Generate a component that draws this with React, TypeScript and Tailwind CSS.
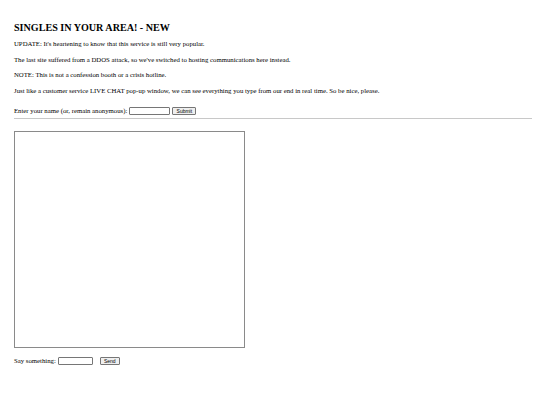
export default function App() {
  return (
    <div className="min-h-screen bg-white text-black font-['Liberation_Serif',serif]">
      <div className="px-[14px] pt-[22px]">
        <h2 className="text-[10.1px] leading-[11px] font-bold">SINGLES IN YOUR AREA! - NEW</h2>
        <div className="mt-[7px] flex flex-col gap-[7.6px] text-[6.75px] leading-[8px]">
          <p>UPDATE: It's heartening to know that this service is still very popular.</p>
          <p>The last site suffered from a DDOS attack, so we've switched to hosting communications here instead.</p>
          <p>NOTE: This is not a confession booth or a crisis hotline.</p>
          <p>Just like a customer service LIVE CHAT pop-up window, we can see everything you type from our end in real time. So be nice, please.</p>
        </div>
        <form className="mt-[12px] flex items-center gap-[2px] text-[6.75px] leading-[8px]" onSubmit={(e) => e.preventDefault()}>
          <span>Enter your name (or, remain anonymous):</span>
          <input type="text" className="w-[41px] h-[8px] border border-[#767676] rounded-[1px] bg-white" />
          <button type="submit" className="w-[24px] h-[8px] border border-[#767676] rounded-[1px] bg-[#efefef] text-[5px] leading-[6px] font-['Liberation_Sans',sans-serif]">
            Submit
          </button>
        </form>
      </div>
      <hr className="mt-[3px] ml-[14px] mr-[8px] border-t-[1px] border-[#c8c8c8]" />
      <div className="px-[14px] pt-[12px]">
        <div className="w-[231px] h-[217px] border border-[#8a8a8a]" />
        <form className="mt-[9px] flex items-center text-[6.75px] leading-[8px]" onSubmit={(e) => e.preventDefault()}>
          <span>Say something:</span>
          <input type="text" className="ml-[2px] w-[35px] h-[8px] border border-[#767676] rounded-[1px] bg-white" />
          <button type="submit" className="ml-[7px] w-[20px] h-[8px] border border-[#767676] rounded-[1px] bg-[#efefef] text-[5px] leading-[6px] font-['Liberation_Sans',sans-serif]">
            Send
          </button>
        </form>
      </div>
    </div>
  )
}
